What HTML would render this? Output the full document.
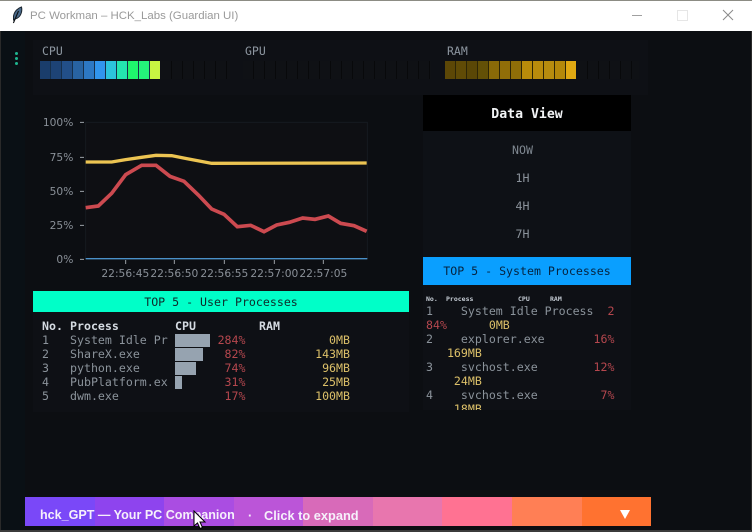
<!DOCTYPE html>
<html><head><meta charset="utf-8">
<style>
html,body{margin:0;padding:0;background:#3a3a3a}
#w{position:relative;width:752px;height:532px;overflow:hidden;background:#0c0e12;font-family:"DejaVu Sans Mono","Liberation Mono",monospace}
#w div,#w span.a{position:absolute}
.t{white-space:pre;font-size:11.6px;line-height:14px;color:#8b939b}
.r{color:#b5474e}.y{color:#dcc069}
.seg{display:flex;gap:1px;height:18px;top:61px}
.seg i{display:block;width:10px;height:18px}
.emp{height:18px;top:61px;background:repeating-linear-gradient(90deg,#0f1115 0 10px,#08090b 10px 11px)}
.lab{font-size:11.5px;color:#8d96a0;top:44px;line-height:14px}
.rt{text-align:right}
</style></head><body>
<div id="w">
<div style="left:0;top:0;width:752px;height:1px;background:#8c8c84"></div>
<div style="left:0;top:1px;width:752px;height:30px;background:#fff"></div>
<svg style="position:absolute;left:10px;top:5px" width="16" height="20" viewBox="0 0 16 20"><path d="M3.5 15 L3.5 11 C4.5 6 8 3 11.5 2 C12.5 6 11 11 7.5 13 L5 14 Z" fill="#4a6a8a" stroke="#1c2630" stroke-width="1"/><path d="M3.4 18 L8.5 6" stroke="#0c1014" stroke-width="1.1" fill="none"/></svg>
<div style="left:30px;top:8px;font:11.45px/16px 'Liberation Sans',sans-serif;color:#9a9a9a;white-space:pre">PC Workman – HCK_Labs (Guardian UI)</div>
<div style="left:632px;top:15px;width:10px;height:1px;background:#a0a0a0"></div>
<div style="left:677px;top:10px;width:9px;height:9px;border:1px solid #e6e6e6"></div>
<svg style="position:absolute;left:722px;top:9px" width="12" height="12" viewBox="0 0 12 12"><path d="M1 1L11 11M11 1L1 11" stroke="#8a8a8a" stroke-width="1"/></svg>

<div style="left:0;top:31px;width:1px;height:500px;background:#2a2a2a"></div>
<div style="left:1px;top:31px;width:24px;height:499px;background:#0a1015"></div>
<div style="left:15px;top:52px;width:3px;height:3px;border-radius:2px;background:#1fb58f"></div>
<div style="left:15px;top:57px;width:3px;height:3px;border-radius:2px;background:#1fb58f"></div>
<div style="left:15px;top:62px;width:3px;height:3px;border-radius:2px;background:#1fb58f"></div>

<div style="left:33px;top:40px;width:615px;height:55px;background:#0e1015"></div>
<div class="lab" style="left:42px">CPU</div>
<div class="lab" style="left:245px">GPU</div>
<div class="lab" style="left:447px">RAM</div>
<div class="seg" style="left:40px;background:#16304c"><i style="background:#1a3d6b"></i><i style="background:#1d4375"></i><i style="background:#224f88"></i><i style="background:#2863a2"></i><i style="background:#2d78c4"></i><i style="background:#3195ee"></i><i style="background:#2cc4dc"></i><i style="background:#24e6ae"></i><i style="background:#1ff56c"></i><i style="background:#24f47a"></i><i style="background:#c8f542"></i></div>
<div class="emp" style="left:161px;width:69px"></div>
<div class="emp" style="left:243px;width:188px"></div>
<div class="seg" style="left:445px;background:#2e2606"><i style="background:#5c4706"></i><i style="background:#604b06"></i><i style="background:#5a4706"></i><i style="background:#635006"></i><i style="background:#8a6a08"></i><i style="background:#916e08"></i><i style="background:#8f6e08"></i><i style="background:#b98c0a"></i><i style="background:#b98c0c"></i><i style="background:#b78c0e"></i><i style="background:#b4880a"></i><i style="background:#e0a812"></i></div>
<div class="emp" style="left:577px;width:62px"></div>

<svg style="position:absolute;left:20px;top:100px" width="380" height="190" viewBox="0 0 1140 570">
<rect x="197" y="67" width="845" height="409" fill="#0e0f13" stroke="#161a20" stroke-width="3"/>
<g stroke="#9aa0a6" stroke-width="3"><path d="M180 67h12M180 172h12M180 274h12M180 376h12M180 478h12M317 480v12M463 480v12M613 480v12M763 480v12M910 480v12"/></g>
<path d="M197 476H1042" stroke="#4a90c8" stroke-width="4" fill="none"/>
<path d="M197 186L275 186L317 179L365 172L408 166L455 167L500 176L575 190L1040 189" stroke="#ecc452" stroke-width="10" fill="none"/>
<path d="M197 323L235 318L275 280L317 224L365 196L408 196L450 229L492 244L535 285L575 327L612 343L652 380L692 376L732 395L770 375L808 367L848 354L885 358L925 348L962 370L1002 377L1040 394" stroke="#cc4a50" stroke-width="11" fill="none"/>
<g font-family="DejaVu Sans,sans-serif" font-size="32" fill="#8a9098">
<text x="160" y="78" text-anchor="end">100%</text><text x="160" y="183" text-anchor="end">75%</text><text x="160" y="285" text-anchor="end">50%</text><text x="160" y="387" text-anchor="end">25%</text><text x="160" y="489" text-anchor="end">0%</text>
<g text-anchor="middle"><text x="316" y="531">22:56:45</text><text x="463" y="531">22:56:50</text><text x="613" y="531">22:56:55</text><text x="763" y="531">22:57:00</text><text x="910" y="531">22:57:05</text></g>
</g>
</svg>

<div style="left:33px;top:291px;width:376px;height:21px;background:#00ffc8;color:#0e2a2a;font-size:11.6px;line-height:23px;text-align:center">TOP 5 - User Processes</div>
<div style="left:33px;top:312px;width:376px;height:100px;background:#0e1015"></div>
<div class="t" style="left:42px;top:319px;color:#d5dbe2;font-weight:600">No.</div>
<div class="t" style="left:70px;top:319px;color:#d5dbe2;font-weight:600">Process</div>
<div class="t" style="left:175px;top:319px;color:#d5dbe2;font-weight:600">CPU</div>
<div class="t" style="left:259px;top:319px;color:#d5dbe2;font-weight:600">RAM</div>

<div class="t" style="left:42px;top:333px">1</div><div class="t" style="left:70px;top:333px">System Idle Pr</div>
<div class="t" style="left:42px;top:347px">2</div><div class="t" style="left:70px;top:347px">ShareX.exe</div>
<div class="t" style="left:42px;top:361px">3</div><div class="t" style="left:70px;top:361px">python.exe</div>
<div class="t" style="left:42px;top:375px">4</div><div class="t" style="left:70px;top:375px">PubPlatform.ex</div>
<div class="t" style="left:42px;top:389px">5</div><div class="t" style="left:70px;top:389px">dwm.exe</div>

<div style="left:175px;top:334px;width:35px;height:13px;background:#96a3b0"></div>
<div style="left:175px;top:348px;width:28px;height:13px;background:#96a3b0"></div>
<div style="left:175px;top:362px;width:21px;height:13px;background:#96a3b0"></div>
<div style="left:175px;top:376px;width:7px;height:13px;background:#96a3b0"></div>

<div class="t r rt" style="left:195px;width:50.5px;top:333px">284%</div>
<div class="t r rt" style="left:195px;width:50.5px;top:347px">82%</div>
<div class="t r rt" style="left:195px;width:50.5px;top:361px">74%</div>
<div class="t r rt" style="left:195px;width:50.5px;top:375px">31%</div>
<div class="t r rt" style="left:195px;width:50.5px;top:389px">17%</div>
<div class="t y rt" style="left:290px;width:60px;top:333px">0MB</div>
<div class="t y rt" style="left:290px;width:60px;top:347px">143MB</div>
<div class="t y rt" style="left:290px;width:60px;top:361px">96MB</div>
<div class="t y rt" style="left:290px;width:60px;top:375px">25MB</div>
<div class="t y rt" style="left:290px;width:60px;top:389px">100MB</div>

<div style="left:423px;top:95px;width:208px;height:36px;background:#000;color:#f2f4f6;font-weight:bold;font-size:13.2px;line-height:40px;text-align:center">Data View</div>
<div style="left:423px;top:131px;width:208px;height:126px;background:#0e1116"></div>
<div class="t" style="left:423px;width:199px;text-align:center;top:143px;color:#7f8891">NOW</div>
<div class="t" style="left:423px;width:199px;text-align:center;top:171px">1H</div>
<div class="t" style="left:423px;width:199px;text-align:center;top:199px">4H</div>
<div class="t" style="left:423px;width:199px;text-align:center;top:227px">7H</div>
<div style="left:423px;top:257px;width:208px;height:28px;background:#0a9fff;color:#06233f;font-size:11.6px;line-height:28px;text-align:center">TOP 5 - System Processes</div>

<div style="left:423px;top:285px;width:208px;height:125px;background:#0e1015;overflow:hidden">
<div class="t" style="left:3px;top:9px;font-size:6.5px;line-height:10px;color:#c5ccd4;font-weight:bold">No.</div>
<div class="t" style="left:23px;top:9px;font-size:6.5px;line-height:10px;color:#c5ccd4;font-weight:bold">Process</div>
<div class="t" style="left:95px;top:9px;font-size:6.5px;line-height:10px;color:#c5ccd4;font-weight:bold">CPU</div>
<div class="t" style="left:127px;top:9px;font-size:6.5px;line-height:10px;color:#c5ccd4;font-weight:bold">RAM</div>
<div class="t" style="left:3px;top:19px">1    System Idle Process  <span class="r">2</span>
<span class="r">84%</span>      <span class="y">0MB</span>
2    explorer.exe       <span class="r">16%</span>
   <span class="y">169MB</span>
3    svchost.exe        <span class="r">12%</span>
    <span class="y">24MB</span>
4    svchost.exe         <span class="r">7%</span>
    <span class="y">18MB</span></div>
</div>

<div style="left:25px;top:497px;width:626px;height:29px;display:flex">
<i style="flex:1;background:#7a48f8"></i><i style="flex:1;background:#8e44ee"></i><i style="flex:1;background:#aa4de2"></i><i style="flex:1;background:#bb55d8"></i><i style="flex:1;background:#d86ab9"></i><i style="flex:1;background:#e876ae"></i><i style="flex:1;background:#ff7292"></i><i style="flex:1;background:#ff7f55"></i><i style="flex:1;background:#ff7230"></i>
</div>
<div style="left:40px;top:507px;font:bold 12.55px/17px 'Liberation Sans',sans-serif;color:#f6f0fb;white-space:pre">hck_GPT — Your PC Companion</div>
<div style="left:248px;top:507px;font:bold 12.8px/17px 'Liberation Sans',sans-serif;color:#f6f0fb;white-space:pre">·</div>
<div style="left:264px;top:507px;font:bold 12.8px/17px 'Liberation Sans',sans-serif;color:#f6f0fb;white-space:pre">Click to expand</div>
<svg style="position:absolute;left:619px;top:509px" width="12" height="11" viewBox="0 0 12 11"><path d="M1 1H11L6 10Z" fill="#fff"/></svg>
<svg style="position:absolute;left:193px;top:510px" width="14" height="20" viewBox="0 0 14 20"><path d="M1 1V16L4.5 13L7 18.5L9.5 17.5L7 12H12Z" fill="#fff" stroke="#000" stroke-width="1"/></svg>

<div style="left:0;top:530px;width:752px;height:2px;background:#3b3b3b"></div>
<div style="left:751px;top:31px;width:1px;height:500px;background:#2a2a2a"></div>
</div>
</body></html>
